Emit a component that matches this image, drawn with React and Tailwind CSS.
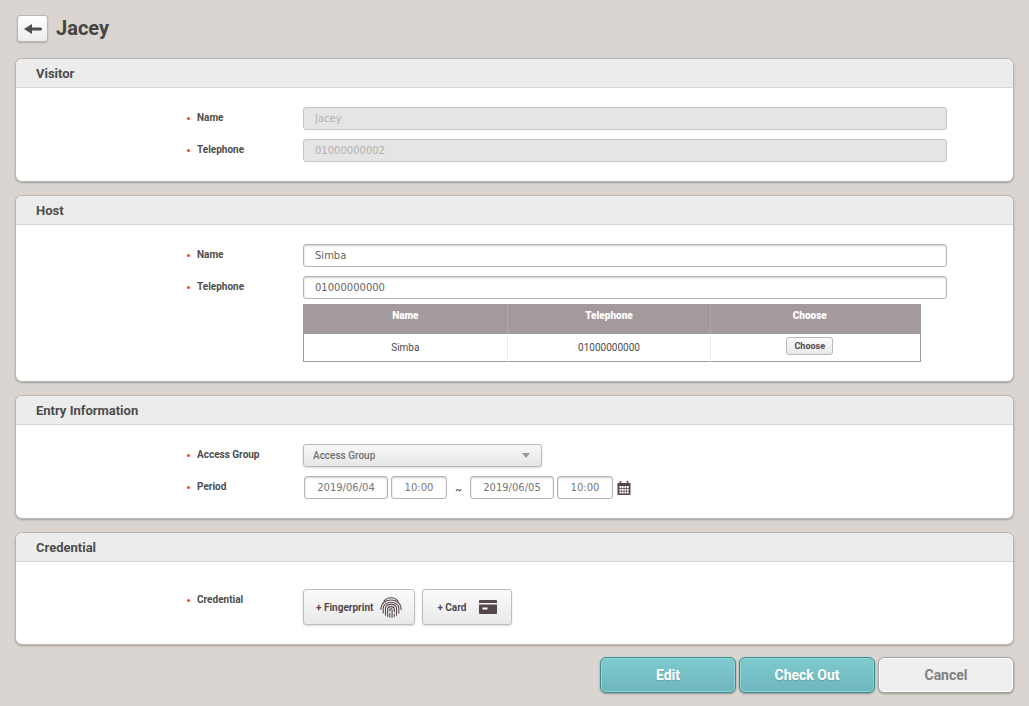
import { useState } from 'react'

function ArrowLeftIcon() {
  return (
    <svg viewBox="0 0 18 10" className="h-[10px] w-[18px]" aria-hidden="true">
      <path d="M0 5 8 0v3.5h8.5a1.5 1.5 0 0 1 0 3H8V10z" fill="#4d4d4d" />
    </svg>
  )
}

function FingerprintIcon() {
  return (
    <svg
      viewBox="0 0 22 21"
      className="h-[21px] w-[22px]"
      fill="none"
      stroke="#55474a"
      strokeWidth="1.1"
      strokeLinecap="round"
      aria-hidden="true"
    >
      <path d="M4 4.200C5.800 1.900 8.200.8 11 .8s5.200 1.100 7 3.400" />
      <path d="M.9 12.500v-1.700C1.200 6.500 5.500 3 11 3s9.800 3.500 10.100 7.800v1.700" />
      <path d="M3.200 16v-5C3.400 7.700 6.700 5.200 11 5.200s7.600 2.500 7.800 5.800v5" />
      <path d="M5.500 18.300V11.200c.2-2.200 2.300-3.800 5.500-3.800s5.300 1.600 5.500 3.800v7.100" />
      <path d="M7.700 19.600v-8c.2-1.200 1.500-2 3.300-2s3.100.8 3.300 2v3.400M14.300 17.300v2.300" />
      <path d="M9.900 14v-1.600c0-.4.500-.7 1.100-.7s1.100.3 1.100.7V20.200M9.900 16.200v4" />
    </svg>
  )
}

function CardIcon() {
  return (
    <svg viewBox="0 0 18 14" className="h-[14px] w-[18px]" aria-hidden="true">
      <path d="M1 0h16a1 1 0 0 1 1 1v2H0V1a1 1 0 0 1 1-1z" fill="#55474a" />
      <path d="M0 4.500h18V13a1 1 0 0 1-1 1H1a1 1 0 0 1-1-1z" fill="#55474a" />
      <path d="M3.500 7.500h5v2h-5z" fill="#fff" />
    </svg>
  )
}

function CalendarIcon() {
  return (
    <svg viewBox="0 0 14 14" className="h-[14px] w-[14px]" aria-hidden="true">
      <path d="M.5 2h2.200V0h1.600v2h5.400V0h1.600v2h2.200v12H.5z" fill="#55474a" />
      <path
        d="M2.500 5h2v2h-2zM5 5h1.700v2H5zM7.400 5h1.700v2H7.400zM9.700 5h2v2h-2zM2.500 7.700h2v2h-2zM5 7.700h1.700v2H5zM7.400 7.700h1.700v2H7.400zM9.700 7.700h2v2h-2zM2.500 10.400h2v2h-2zM5 10.400h1.700v2H5zM7.400 10.400h1.700v2H7.400zM9.700 10.400h2v2h-2z"
        fill="#fff"
      />
    </svg>
  )
}

function Panel({ title, className = 'pt-[19px]', children }) {
  return (
    <section className="overflow-hidden rounded-[7px] border border-[#b9b6b4] bg-white shadow-[0_1px_2px_rgba(0,0,0,0.25)]">
      <h2 className="h-[29px] border-b border-[#d6d6d6] bg-[#ececec] px-5 text-[13px] leading-[30px] font-bold text-[#4d4d4d]">
        {title}
      </h2>
      <div className={`flex flex-col gap-[9px] pr-[66px] pb-[19px] pl-[171px] ${className}`}>{children}</div>
    </section>
  )
}

function Field({ label, htmlFor, children }) {
  const Label = htmlFor ? 'label' : 'span'

  return (
    <div className="flex items-start">
      <Label
        htmlFor={htmlFor}
        className="flex w-[116px] shrink-0 items-center gap-[7px] text-[10px] leading-[22px] font-bold text-[#4d4d4d]"
      >
        <span className="size-[3px] rounded-full bg-[#f0452f]" />
        {label}
      </Label>
      <div className="min-w-0 flex-1">{children}</div>
    </div>
  )
}

const inputBase =
  "block h-[23px] rounded-[3px] border font-['DejaVu_Sans',sans-serif] text-[10px] outline-none"

function TextInput({ id, value, onChange, disabled = false }) {
  return (
    <input
      id={id}
      type="text"
      value={value}
      onChange={onChange}
      disabled={disabled}
      className={`${inputBase} w-full px-[11px] ${
        disabled
          ? 'border-[#c6c6c6] bg-[#e5e5e5] text-[#b2b2b2]'
          : 'border-[#b5b5b5] bg-white text-[#666] shadow-[inset_0_1px_2px_rgba(0,0,0,0.2)]'
      }`}
    />
  )
}

function PeriodInput({ id, label, value, onChange, className }) {
  return (
    <input
      id={id}
      type="text"
      aria-label={label}
      value={value}
      onChange={onChange}
      className={`${inputBase} border-[#b5b5b5] bg-white text-center text-[#777] shadow-[inset_0_1px_2px_rgba(0,0,0,0.2)] ${className}`}
    />
  )
}

function CredentialButton({ children, className }) {
  return (
    <button
      type="button"
      className={`flex h-[36px] items-center rounded-[3px] border border-[#bdbdbd] bg-linear-to-b from-[#fbfbfb] to-[#e9e9e9] text-[10px] font-bold text-[#55474a] shadow-[0_1px_2px_rgba(0,0,0,0.15)] ${className}`}
    >
      {children}
    </button>
  )
}

const hosts = [{ name: 'Simba', telephone: '01000000000' }]

export default function App() {
  const [host, setHost] = useState(hosts[0])
  const [period, setPeriod] = useState({
    startDate: '2019/06/04',
    startTime: '10:00',
    endDate: '2019/06/05',
    endTime: '10:00',
  })

  const updateHost = (key) => (event) => setHost({ ...host, [key]: event.target.value })
  const updatePeriod = (key) => (event) => setPeriod({ ...period, [key]: event.target.value })

  return (
    <main className="min-h-screen bg-[#dad5d0] px-[15px] pt-[15px] pb-[13px] font-[Roboto,sans-serif]">
      <header className="flex items-center gap-2 pb-4 pl-[2px]">
        <button
          type="button"
          aria-label="Back"
          className="flex h-[27px] w-[31px] items-center justify-center rounded-[3px] border border-[#b9b6b4] bg-linear-to-b from-white to-[#ececec] shadow-[0_1px_2px_rgba(0,0,0,0.2)]"
        >
          <ArrowLeftIcon />
        </button>
        <h1 className="text-[20px] leading-[27px] font-bold text-[#444]">Jacey</h1>
      </header>

      <div className="flex flex-col gap-[13px]">
        <Panel title="Visitor">
          <Field label="Name" htmlFor="visitor-name">
            <TextInput id="visitor-name" value="Jacey" disabled />
          </Field>
          <Field label="Telephone" htmlFor="visitor-telephone">
            <TextInput id="visitor-telephone" value="01000000002" disabled />
          </Field>
        </Panel>

        <Panel title="Host">
          <Field label="Name" htmlFor="host-name">
            <TextInput id="host-name" value={host.name} onChange={updateHost('name')} />
          </Field>
          <Field label="Telephone" htmlFor="host-telephone">
            <TextInput id="host-telephone" value={host.telephone} onChange={updateHost('telephone')} />
            <table className="mt-[5px] w-24/25 table-fixed border-collapse border border-[#a39a9d] text-center text-[10px]">
              <thead>
                <tr className="h-[29px] bg-[#a39a9d] text-white">
                  <th className="w-[33%] border-r border-[#b0a8aa] pb-[7px] font-black">Name</th>
                  <th className="w-[33%] border-r border-[#b0a8aa] pb-[7px] font-black">Telephone</th>
                  <th className="pr-3 pb-[7px] font-black">Choose</th>
                </tr>
              </thead>
              <tbody>
                {hosts.map((item) => (
                  <tr key={item.telephone} className="h-[28px] text-[#4d4d4d]">
                    <td className="border-r border-[#ececec]">{item.name}</td>
                    <td className="border-r border-[#ececec]">{item.telephone}</td>
                    <td className="pr-3 align-middle">
                      <button
                        type="button"
                        onClick={() => setHost(item)}
                        className="mx-auto mb-[2px] block h-[18px] w-[47px] rounded-[3px] border border-[#b9b9b9] bg-linear-to-b from-[#fbfbfb] to-[#e9e9e9] text-[9px] leading-[16px] font-bold text-[#55474a]"
                      >
                        Choose
                      </button>
                    </td>
                  </tr>
                ))}
              </tbody>
            </table>
          </Field>
        </Panel>

        <Panel title="Entry Information">
          <Field label="Access Group" htmlFor="access-group">
            <div className="relative w-[239px]">
              <select
                id="access-group"
                className="block h-[23px] w-full appearance-none rounded-[3px] border border-[#b9b9b9] bg-linear-to-b from-[#f8f8f8] to-[#e6e6e6] px-[9px] text-[10px] font-medium text-[#707070] shadow-[0_1px_2px_rgba(0,0,0,0.15)] outline-none"
              >
                <option>Access Group</option>
              </select>
              <svg
                viewBox="0 0 8 5"
                className="pointer-events-none absolute top-[9px] right-3 h-[5px] w-2"
                aria-hidden="true"
              >
                <path d="M0 0h8L4 5z" fill="#999" />
              </svg>
            </div>
          </Field>
          <Field label="Period" htmlFor="start-date">
            <div className="flex items-center gap-[3px] pl-px">
              <PeriodInput
                id="start-date"
                value={period.startDate}
                onChange={updatePeriod('startDate')}
                className="w-[84px]"
              />
              <PeriodInput
                label="Start time"
                value={period.startTime}
                onChange={updatePeriod('startTime')}
                className="w-[56px]"
              />
              <span className="w-[17px] pt-1 text-center text-[10px] leading-[19px] font-medium text-[#4d4d4d]">~</span>
              <PeriodInput
                label="End date"
                value={period.endDate}
                onChange={updatePeriod('endDate')}
                className="w-[84px]"
              />
              <PeriodInput
                label="End time"
                value={period.endTime}
                onChange={updatePeriod('endTime')}
                className="w-[56px]"
              />
              <button type="button" aria-label="Open calendar" className="ml-px">
                <CalendarIcon />
              </button>
            </div>
          </Field>
        </Panel>

        <Panel title="Credential" className="pt-[27px]">
          <Field label="Credential">
            <div className="flex gap-[7px]">
              <CredentialButton className="gap-[7px] px-3">
                + Fingerprint
                <FingerprintIcon />
              </CredentialButton>
              <CredentialButton className="gap-[13px] px-[14px]">
                + Card
                <CardIcon />
              </CredentialButton>
            </div>
          </Field>
        </Panel>
      </div>

      <footer className="flex justify-end gap-[3px] pt-3 text-[14px] font-bold">
        {['Edit', 'Check Out'].map((label) => (
          <button
            key={label}
            type="button"
            className="h-[36px] w-[136px] rounded-[6px] border border-[#36908f] bg-linear-to-b from-[#7ecace] to-[#6eb7bd] text-white shadow-[inset_0_0_0_1px_#8fd5d7,0_1px_2px_rgba(0,0,0,0.35)] text-shadow-[0_1px_1px_rgba(0,0,0,0.15)]"
          >
            {label}
          </button>
        ))}
        <button
          type="button"
          className="h-[36px] w-[136px] rounded-[6px] border border-[#a5a5a5] bg-[#eee] text-[#808080] shadow-[inset_0_0_0_1px_#fff,0_1px_2px_rgba(0,0,0,0.3)]"
        >
          Cancel
        </button>
      </footer>
    </main>
  )
}
